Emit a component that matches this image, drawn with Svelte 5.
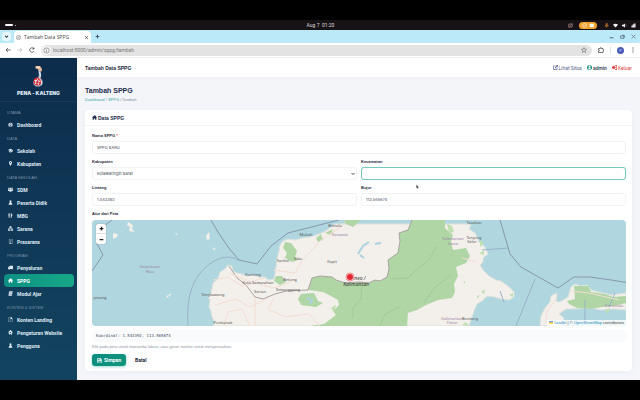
<script lang="ts">
	const menu = [
		{ title: 'UTAMA', items: [{ icon: 'gauge', label: 'Dashboard' }] },
		{
			title: 'DATA',
			items: [
				{ icon: 'school', label: 'Sekolah' },
				{ icon: 'pin', label: 'Kabupaten' },
			],
		},
		{
			title: 'DATA SEKOLAH',
			items: [
				{ icon: 'users', label: 'SDM' },
				{ icon: 'user', label: 'Peserta Didik' },
				{ icon: 'food', label: 'MBG' },
				{ icon: 'boxes', label: 'Sarana' },
				{ icon: 'building', label: 'Prasarana' },
			],
		},
		{
			title: 'PROGRAM',
			items: [
				{ icon: 'truck', label: 'Penyaluran' },
				{ icon: 'home', label: 'SPPG' },
				{ icon: 'book', label: 'Modul Ajar' },
			],
		},
		{
			title: 'KONTEN & SISTEM',
			items: [
				{ icon: 'file', label: 'Konten Landing' },
				{ icon: 'gear', label: 'Pengaturan Website' },
				{ icon: 'user', label: 'Pengguna' },
			],
		},
	];

	const icons: Record<string, string> = {
		gauge: 'M8 2a7 7 0 0 0-7 7c0 2 1 4 2 5h10c1-1 2-3 2-5a7 7 0 0 0-7-7zM7 4h2v2H7zM3 8h2v2H3zm8 0h2v2h-2zM7 8h2v3l1 2H6l1-2z',
		school: 'M8 2 0 6l8 4 6-3v5h2V6zM3 9v3c2 3 8 3 10 0V9l-5 3z',
		pin: 'M8 0a5 5 0 0 0-5 5c0 4 5 11 5 11s5-7 5-11a5 5 0 0 0-5-5zm0 3a2 2 0 1 1 0 4 2 2 0 0 1 0-4z',
		users: 'M1 2h4v4H1zm5 0h4v5H6zm5 0h4v4h-4zM0 7h5v6H0zm5 1h6v7H5zm6-1h5v6h-5z',
		user: 'M8 1a3 3 0 0 1 3 3v2a3 3 0 0 1-6 0V4a3 3 0 0 1 3-3zM6 9h4c3 1 4 3 4 6H2c0-3 1-5 4-6z',
		food: 'M1 1h1v4h1V1h1v4h1V1h1v6L5 8v7H2V8L1 7zm7 0c5 0 6 3 6 8h-2v6H9V1z',
		boxes: 'M5 1h6v6H5zM0 8h7v7H0zm9 0h7v7H9zM2 10v3h3v-3zm9 0v3h3v-3z',
		building: 'M3 0h11v16H3zm1 1v14h9V1zm2 2h2v2H6zm3 0h2v2H9zM6 7h2v2H6zm3 0h2v2H9zm-2 4h3v4H7z',
		truck: 'M6 2h10v9h-1a2 2 0 1 1-4 2H6a2 2 0 1 1-4 0H0V8l3-4h3zM3 6 2 8h3V6z',
		home: 'M8 1 0 8h2v7h4v-4h4v4h4V8h2l-3-3V2h-2v1z',
		book: 'M4 1h11l-2 11H4v1h9v2H3c-2 0-2-2-1-4zm2 3v1h6V4zm0 3v1h5V7z',
		file: 'M2 0h8l4 4v12H2zm1 1v14h10V6H8V1zm2 7h6v1H5zm0 3h5v1H5z',
		gear: 'M7 0h2l1 3 3-1 1 2-2 2v1l3 1v2l-3 1 1 3-2 1-2-2H7l-2 2-2-1 1-3-3-1V8l3-1V6L2 4l1-2 3 1zm1 6a2 2 0 1 0 0 4 2 2 0 0 0 0-4z',
		save: 'M1 1h11l3 3v11H1zm3 2v4h7V3zm4 0h2v3H8zM4 10v4h8v-4z',
		exit: 'M0 5h5V1l7 7-7 7v-4H0zm10-4h6v14h-6v-2h4V3h-4z',
		external: 'M1 2h8v2H3v9h9V9h2v6H1zm9-2h6v6l-2-2-6 6-2-2 6-6z',
		profile: 'M8 0a8 8 0 1 1 0 16A8 8 0 0 1 8 0zm0 2a3 3 0 0 0-3 4 3 3 0 0 0 6 0 3 3 0 0 0-3-4zM3 12c3 3 7 3 10 0-2-3-8-3-10 0z',
	};

	const places = [
		{ x: 243, y: 7, name: 'Bintulu' },
		{ x: 214, y: 16, name: 'Mukah' },
		{ x: 248, y: 16, name: 'Sarawak', soft: true },
		{ x: 240, y: 43, name: 'Kapit' },
		{ x: 206, y: 40, name: 'Sibu' },
		{ x: 191, y: 42, name: 'Sarikei' },
		{ x: 161, y: 56, name: 'Kuching' },
		{ x: 166, y: 64, name: 'Kota Samarahan' },
		{ x: 198, y: 61, name: 'Betong' },
		{ x: 168, y: 73, name: 'Serian' },
		{ x: 196, y: 71, name: 'Simanggang' },
		{ x: 121, y: 76, name: 'Singkawang' },
		{ x: 131, y: 104, name: 'Pontianak' },
		{ x: 8, y: 79, name: 'pinang' },
		{ x: 382, y: 4, name: 'Tarakan' },
		{ x: 382, y: 19, name: 'Tanjung' },
		{ x: 380, y: 23, name: 'Selor' },
		{ x: 378, y: 100, name: 'Bontang' },
		{ x: 58, y: 48, name: 'Kepulauan', soft: true },
		{ x: 58, y: 53, name: 'Riau', soft: true },
		{ x: 361, y: 20, name: 'Kalimantan', soft: true },
		{ x: 361, y: 25, name: 'Utara', soft: true },
		{ x: 360, y: 100, name: 'Kalimantan', soft: true },
		{ x: 360, y: 104, name: 'Timur', soft: true },
		{ x: 522, y: 87, name: 'Gorontalo', soft: true },
	];

	const active = 'SPPG';
	let name = $state('SPPG BARU');
	let district = $state('Kotawaringin Barat');
	let subdistrict = $state('');
	let lat = $state('1.543392');
	let lng = $state('113.565674');
</script>

{#snippet icon(id: string)}
	<svg class="icon" viewBox="0 0 16 16" aria-hidden="true">
		<path d={icons[id]} fill="currentColor" fill-rule="evenodd" />
	</svg>
{/snippet}

<div class="desktop">
	<div class="system">
		<div class="spaces"><i></i><b></b></div>
		<time>Aug 7&nbsp; 01:20</time>
		<div class="tray">
			<svg class="glyph" viewBox="0 0 12 12"><path d="M2 3h8v6H2zM1 11 11 1" fill="none" stroke="#a77" stroke-width="1.5" /><circle cx="6" cy="6" r="5" fill="none" stroke="#888" /></svg>
			<span class="share">
				<svg viewBox="0 0 36 12"><circle cx="11" cy="6" r="4" fill="none" stroke="#fff" /><path d="M9 6h4M22 3h7v6h-7z" stroke="#fff" fill="#fff" /></svg>
			</span>
			<svg class="glyph" viewBox="0 0 12 12"><path d="M5 1h3v6H5zM3 5v3h7V5M6 8v3" stroke="#c87a2c" fill="#c87a2c" /></svg>
			<svg class="glyph" viewBox="0 0 12 12"><path d="M0 4q6-5 12 0L6 11z" fill="#fff" /></svg>
			<svg class="glyph" viewBox="0 0 12 12"><path d="M0 4h3l4-3v10L3 8H0z" fill="#fff" /><path d="M9 3q3 3 0 6" fill="none" stroke="#ccc" /></svg>
			<svg class="glyph" viewBox="0 0 12 12"><path d="M1 6h3V3h3V1h4v10H1z" fill="#ddd" /></svg>
		</div>
	</div>

	<div class="tabs">
		<button class="tab-list" aria-label="Search tabs">
			<svg viewBox="0 0 12 12"><path d="m4 5 2 2 2-2" fill="none" stroke="#233" stroke-width="1.4" /></svg>
		</button>
		<div class="tab">
			<svg class="glyph" viewBox="0 0 12 12"><circle cx="6" cy="6" r="5" fill="none" stroke="#777" stroke-width="1.4" /><path d="M2 9 9 2M5 6l4 2" stroke="#777" stroke-width="1.4" /></svg>
			<span>Tambah Data SPPG</span>
			<button aria-label="Close tab"><svg viewBox="0 0 8 8"><path d="m2 2 4 4m0-4L2 6" stroke="#333" stroke-width="1.3" /></svg></button>
		</div>
		<button class="new-tab" aria-label="New tab"><svg viewBox="0 0 8 8"><path d="M4 1v6M1 4h6" stroke="#234" stroke-width="1.2" /></svg></button>
		<div class="window-buttons">
			<button aria-label="Minimize"><svg viewBox="0 0 8 8"><path d="M1 6h6" stroke="#456" stroke-width="1.4" /></svg></button>
			<button aria-label="Restore"><svg viewBox="0 0 8 8"><path d="M1 3h5v4H1zm2-1h4v4" fill="none" stroke="#456" /></svg></button>
			<button aria-label="Close window"><svg viewBox="0 0 8 8"><path d="m1 1 6 6m0-6L1 7" stroke="#678" stroke-width="1.2" /></svg></button>
		</div>
	</div>

	<div class="toolbar">
		<button aria-label="Back"><svg viewBox="0 0 12 12"><path d="M11 6H2m4-4L2 6l4 4" fill="none" stroke="#444" stroke-width="1.5" /></svg></button>
		<button aria-label="Forward"><svg viewBox="0 0 12 12"><path d="M1 6h9M6 2l4 4-4 4" fill="none" stroke="#bbb" stroke-width="1.5" /></svg></button>
		<button aria-label="Reload"><svg viewBox="0 0 12 12"><path d="M10 4a4.5 4.5 0 1 0 0 4M10 1v3H7" fill="none" stroke="#444" stroke-width="1.6" /></svg></button>
		<div class="address">
			<span class="site-info"><svg viewBox="0 0 12 12"><circle cx="6" cy="6" r="4.5" fill="none" stroke="#666" /><path d="M6 5v4M6 3v1" stroke="#666" /></svg></span>
			<input aria-label="Address" value="localhost:8000/admin/sppg/tambah" />
			<button aria-label="Bookmark"><svg viewBox="0 0 12 12"><path d="m6 1 1.5 3.4 3.5.3-2.7 2.4.8 3.6L6 8.8l-3.1 1.9.8-3.6L1 4.7l3.5-.3z" fill="none" stroke="#555" /></svg></button>
		</div>
		<div class="browser-actions">
			<button aria-label="Extensions"><svg viewBox="0 0 12 12"><path d="M1 3h3.5V1.500h2V3H10v3h1v2h-1v3H1V8h1.500V6H1z" fill="none" stroke="#444" stroke-width="1.4" /></svg></button>
			<i class="divider"></i>
			<button class="avatar" aria-label="Profile">P</button>
			<button aria-label="Browser menu"><svg viewBox="0 0 12 12"><path d="M5 1h2v2H5zm0 4h2v2H5zm0 4h2v2H5z" fill="#444" /></svg></button>
		</div>
	</div>

	<div class="workspace">
		<aside>
			<div class="brand">
				<svg viewBox="0 0 24 44" aria-hidden="true">
					<path d="M6 2h9l4 6-1 5h-6l-1-5-5-1z" fill="#e9b89a" />
					<path d="M8 3h7v3H8z" fill="#f7dfca" />
					<path d="M15 11q4 9 1 14l4 7q2 8-6 11H7q-7-4-5-10 3-6 9-7 3-6 1-13z" fill="#aebfd2" />
					<circle cx="10" cy="33" r="8" fill="#d52d3b" />
					<path d="m10 26 2 5 5 1-4 3v5l-4-3-5 2 2-5-3-4h5z" fill="#f0e1e4" />
					<path d="m10 29 1 4 3 1-3 2-2 2-2-3z" fill="#c52838" />
					<path d="M14 14q4 8 0 13 6 4 4 12" fill="none" stroke="#f2f5f9" stroke-width="1.5" />
				</svg>
				<strong>PENA - KALTENG</strong>
			</div>
			<nav>
				{#each menu as group (group.title)}
					<h2>{group.title}</h2>
					{#each group.items as item (item.label)}
						<a href="#{item.label}" class:active={item.label === active}>
							{@render icon(item.icon)}
							<span>{item.label}</span>
						</a>
					{/each}
				{/each}
			</nav>
		</aside>

		<main>
			<header>
				<strong>Tambah Data SPPG</strong>
				<div class="account">
					<a href="#situs">{@render icon('external')}Lihat Situs</a>
					<a href="#admin" class="admin"><span class="badge">{@render icon('profile')}</span>admin</a>
					<a href="#keluar" class="logout">{@render icon('exit')}Keluar</a>
				</div>
			</header>

			<div class="content">
				<h1>Tambah SPPG</h1>
				<div class="crumbs">
					<a href="#dashboard">Dashboard</a> / <a href="#sppg">SPPG</a> / Tambah
				</div>

				<section class="card">
					<h3>{@render icon('home')}Data SPPG</h3>
					<form>
						<div class="field wide">
							<label for="name">Nama SPPG <em>*</em></label>
							<input id="name" bind:value={name} />
						</div>
						<div class="field">
							<label for="district">Kabupaten</label>
							<div class="select">
								<select id="district" bind:value={district}>
									<option>Kotawaringin Barat</option>
								</select>
								<svg viewBox="0 0 8 8"><path d="m1 2 3 3 3-3" fill="none" stroke="#333" stroke-width="1.8" /></svg>
							</div>
						</div>
						<div class="field">
							<label for="subdistrict">Kecamatan</label>
							<input id="subdistrict" class="focused" bind:value={subdistrict} />
						</div>
						<div class="field">
							<label for="lat">Lintang</label>
							<input id="lat" bind:value={lat} />
						</div>
						<div class="field">
							<label for="lng">Bujur</label>
							<input id="lng" bind:value={lng} />
						</div>

						<div class="wide">
							<p class="map-title">Atur dari Peta</p>
							<div class="map">
								<svg viewBox="0 0 534 106" preserveAspectRatio="xMidYMid slice" role="img" aria-label="Peta Kalimantan">
									<path
										class="land"
										d="M121 106l2-3-3-6-1-6-2-4 1-7-2-4 3-3 1-5 1-5 5-4 2-7 5-3 3-4 4 1 1 5 4 2 5 1 4 2 7-1 7 2 4 0 5 3 5-1 1-5 1-7 1-8 2-8 1-6 3-4 5-2 7 1 7-2 8-1 9-3 7-3 6-5 3-2H375L379 5 377 9 383 13 385 17 387 22 393 27 396 34 391 38 391 42 388 45 391 50 397 56 404 60 409 61 416 66 422 72 422 77 417 80 409 79 402 77 395 76 390 81 385 84 382 91 380 97 377 106Z"
									/>
									<path
										class="land"
										d="M448 106l1-10 4-8 5-6 1-6 6-3-1 8 4 1 8-5 3-10 4-3 6 2 6-1 4 5 8 2 12 3 15-2v17l-12-1-13 1-9-2-18 1-8 0-7 5 5 4-2 7z"
									/>
									<path
										class="forest"
										d="M320 0L316 10 307 13 308 21 306 33 296 40 297 49 295 57 288 61 283 60 277 63 268 62 253 63 244 60 240 57 228 56 220 58 216 70 231 72 239 76 246 80 247 85 241 91 244 95 232 104 218 106H315L316 93 325 90 334 85 346 80 360 78 363 72 362 64 366 56 364 47 374 43 378 36 374 28 361 30 359 22 361 15 353 8V0Z"
									/>
									<path class="forest" d="M482 66L496 66 499 72 513 74 521 77 534 76V83L526 85 510 87 498 89 485 88 477 84 475 81 483 79ZM193 22l6 1 6 8-2 6 3 3-6 2-7-4 2-5-4-5zM224 18l5-4 2 6-5 2zM233 13l8-4-2 6zM255 0h14l-8 7-7-3-3-2zM184 56l6 0 4 6-6 3-6-4zM209 74l13-1 4 8 5 2-7 4-15-2-3-6z" />
									<path class="forest small" d="M389 72l4-3-1 5zM385 76l3-1-3 4zM387 33l5-2v4zM417 75l4-2v4zM239 88l5-3-2 7zM513 90l5-2-2 6zM388 20l4 3-4 4zM355 4l5 2 2 6-5 1zM371 62l2-1v3zM370 105l4-3 3 4z" />
									<path class="water" d="M266 34l5-8 6-4M268 35l4 3M283 24l6-1M215 78l5 2-2 4" />
									<path class="island" d="M36 2l5 3-1 4 3 3-6-1 1-4-3-2zM21 13l5 1-1 3-4 2zM114 16l3-4 1 7-3 1zM120 27l4 2-2 1zM83 13l3 1-2 1zM74 76l3-1-1 3zM77 74l3 0-3 2z" />
									<path class="sea-line" d="M12 6l8-6M0 51l11-16L5 24M119 0l7 12 10 15 11 13 18 4 14-18 17-13L247 0M408 0l10 34 11 13 37 21 16-11 16 0 21 3 31 5" />
									<path class="sea-line thin" d="M96 106q-4-47 26-65 15-8 26 0M390 30l26-2M443 59l-19 47M408 71l4 11M523 73l-6 14M493 80v26" />
									<path class="state" d="M137 46l8 12 9 7 9 12 8 2 12-5 11-3 22-1 4-12 8-2 12 1 4 3 9 3 15-1 9 1 6-3 5 1 7-4 2-8-1-9 10-7 2-12-1-8 9-3 4-10" />
									<path class="road" d="M121 60l15-3 14 9 14-3 18 5 16-6M123 85l21-6 14 8 18-9M132 106l4-14 14-3 8 17M181 50l22 3 7-12 9-10 11-12 19-12M137 53l22 9 15-5M182 78l-6 11 17 8 24-3 11 12M163 78v28M370 38l15 4M465 78l-10 13-1 12M479 71l18 2 30 7M253 2l-5 6-8 5" />
									<path class="province" d="M270 65l-1 14-8 9v10M345 26l-8 14-14 11-7 7-15 1M359 55l-17 13-10 15M309 86l-16 8-5 12" />
									{#each places as place}
										<text x={place.x} y={place.y} class:soft={place.soft}>{place.name}</text>
									{/each}
									<text class="region" x="264" y="60">Borneo /</text>
									<text class="region" x="264" y="66">Kalimantan</text>
									<circle cx="258" cy="57" r="4" fill="#fbeaea" stroke="#ee8a8f" />
									<circle cx="258" cy="57" r="3" fill="#e1262f" />
								</svg>
								<div class="zoom">
									<button type="button" aria-label="Zoom in"><svg viewBox="0 0 8 8"><path d="M4 1v6M1 4h6" /></svg></button>
									<button type="button" aria-label="Zoom out"><svg viewBox="0 0 8 8"><path d="M1 4h6" /></svg></button>
								</div>
								<div class="attribution">
									<svg viewBox="0 0 12 8"><path d="M0 0h12v4H0z" fill="#4c7be1" /><path d="M0 4h12v4H0z" fill="#ffd500" /></svg>
									<a href="#leaflet">Leaflet</a> | © <a href="#osm">OpenStreetMap</a> contributors
								</div>
							</div>
							<output>Koordinat: {lat}, {lng}</output>
							<p class="help">Klik pada peta untuk menandai lokasi, atau geser marker untuk menyesuaikan.</p>
							<div class="actions">
								<button type="submit" class="submit">{@render icon('save')}Simpan</button>
								<button type="button" class="cancel">Batal</button>
							</div>
						</div>
					</form>
				</section>
			</div>
		</main>
	</div>
	<svg class="pointer" viewBox="0 0 8 12" aria-hidden="true"><path d="M1 0v9l2-2 2 4 1-1-1-3h3z" fill="#222" stroke="#fff" stroke-width="0.5" /></svg>
</div>

<style>
	:global(body) {
		margin: 0;
		background: #000;
	}

	.desktop,
	.desktop * {
		box-sizing: border-box;
	}

	.desktop {
		position: relative;
		display: flex;
		flex-direction: column;
		min-height: 100vh;
		padding: 20px 0;
		overflow: hidden;
		background: #000;
		color: #1e293b;
		font-family: 'Liberation Sans', Arial, sans-serif;
		font-size: 4px;
	}

	svg {
		display: block;
	}

	a {
		color: inherit;
		text-decoration: none;
	}

	button {
		border: 0;
		padding: 0;
		background: transparent;
		color: inherit;
		font: inherit;
	}

	h1,
	h2,
	h3,
	p {
		margin: 0;
	}

	.icon {
		width: 5px;
		height: 5px;
		flex: none;
	}

	.glyph {
		width: 5px;
		height: 5px;
	}

	.system {
		display: grid;
		grid-template-columns: 1fr auto 1fr;
		align-items: center;
		height: 10px;
		padding: 0 4px 0 5px;
		background: #171216;
		color: #ddd;
		font: 5px Roboto, sans-serif;
	}

	.spaces {
		display: flex;
		align-items: center;
		gap: 2px;
	}

	.spaces i {
		width: 8px;
		height: 2px;
		border-radius: 2px;
		background: #fff;
	}

	.spaces b {
		width: 1px;
		height: 1px;
		background: #aaa;
	}

	.tray {
		display: flex;
		align-items: center;
		justify-content: flex-end;
		gap: 4px;
	}

	.share {
		width: 18px;
		margin: 0 3px 0 2px;
		border-radius: 4px;
		background: #f0a42f;
	}

	.share svg {
		height: 7px;
		width: 18px;
	}

	.tabs {
		display: flex;
		align-items: center;
		height: 13px;
		padding: 0 4px 0 2px;
		background: #bce9f7;
	}

	.tab-list {
		width: 9px;
		height: 9px;
		border-radius: 3px;
		background: #e6f8fd;
	}

	.tab {
		display: flex;
		align-items: center;
		align-self: flex-end;
		gap: 3px;
		width: 77px;
		height: 12px;
		margin-left: 3px;
		padding: 0 2px;
		border-radius: 4px 4px 0 0;
		background: #fff;
		color: #444;
	}

	.tab span {
		flex: 1;
		white-space: nowrap;
		font: 5px 'Open Sans', sans-serif;
	}

	.tab button,
	.new-tab,
	.window-buttons button {
		width: 5px;
		height: 5px;
	}

	.new-tab {
		margin-left: 4px;
	}

	.window-buttons {
		display: flex;
		gap: 6px;
		margin-left: auto;
	}

	.toolbar {
		display: flex;
		align-items: center;
		gap: 6px;
		height: 15px;
		padding: 0 4px 0 5px;
		border-bottom: 1px solid #eee;
		background: #fff;
	}

	.toolbar button {
		width: 6px;
		height: 6px;
		flex: none;
	}

	.address {
		display: flex;
		align-items: center;
		flex: 1;
		gap: 2px;
		height: 11px;
		padding: 0 5px 0 1px;
		border-radius: 6px;
		background: #e3e3e3;
	}

	.site-info {
		padding: 1px;
		border-radius: 5px;
		background: #f5f5f5;
	}

	.site-info svg {
		width: 7px;
		height: 7px;
	}

	.address input {
		flex: 1;
		min-width: 0;
		padding: 0;
		border: 0;
		outline: 0;
		background: transparent;
		color: #777;
		font: 5px Roboto, sans-serif;
	}

	.browser-actions {
		display: flex;
		align-items: center;
		gap: 6px;
	}

	.divider {
		width: 1px;
		height: 6px;
		background: #d5e5ea;
	}

	.toolbar .avatar {
		width: 7px;
		height: 7px;
		border-radius: 50%;
		background: #4859b5;
		color: #dbe0ff;
		line-height: 7px;
	}

	.workspace {
		display: flex;
		flex: 1;
	}

	aside {
		width: 77px;
		flex: none;
		background: linear-gradient(#0d2c4c, #124460);
		color: #dfe8f2;
	}

	.brand {
		display: flex;
		flex-direction: column;
		align-items: center;
		gap: 3px;
		height: 44px;
		padding-top: 7px;
		border-bottom: 1px solid #1a3b59;
		font: 5px/6px Inter, sans-serif;
	}

	.brand svg {
		width: 13px;
		height: 22px;
	}

	.brand strong {
		font-weight: 900;
	}

	nav {
		padding: 3px 3px 0 4px;
	}

	nav h2 {
		height: 13px;
		padding: 5px 3px 0;
		color: #7890a8;
		font-size: 4px;
		font-weight: 400;
		line-height: 6px;
	}

	nav a {
		display: flex;
		align-items: center;
		gap: 4px;
		height: 13px;
		padding: 0 4px;
		border-radius: 4px;
		font: 700 5px Roboto, sans-serif;
	}

	nav a.active {
		background: linear-gradient(90deg, #0d8f83, #17a887);
		color: #fff;
	}

	main {
		flex: 1;
		min-width: 0;
		background: #f3f5f9;
	}

	header {
		display: flex;
		align-items: center;
		justify-content: space-between;
		height: 20px;
		padding: 0 8px;
		border-bottom: 1px solid #eef1f5;
		background: #fff;
		font-size: 5px;
	}

	.account {
		display: flex;
		gap: 5px;
		font: 5px Roboto, sans-serif;
	}

	.account a {
		display: flex;
		align-items: center;
		gap: 1px;
		color: #56618a;
	}

	.account .admin {
		color: #26364a;
		font-weight: 500;
	}

	.badge {
		color: #149080;
	}

	.account .logout {
		color: #e23a3a;
	}

	.content {
		padding: 9px 8px;
	}

	h1 {
		color: #1d2b4c;
		font-size: 7px;
		line-height: 8px;
	}

	.crumbs {
		margin-top: 2px;
		color: #8290a1;
		font-size: 4px;
		line-height: 5px;
	}

	.crumbs a {
		color: #35aaa0;
	}

	.card {
		margin-top: 8px;
		border-radius: 4px;
		background: #fff;
		box-shadow: 0 1px 4px #d7dde855;
	}

	h3 {
		display: flex;
		align-items: center;
		gap: 1px;
		height: 16px;
		padding: 0 7px;
		border-bottom: 1px solid #f1f4f7;
		color: #1d2b4c;
		font-size: 5px;
	}

	form {
		display: grid;
		grid-template-columns: 1fr 1fr;
		gap: 5px 4px;
		padding: 7px 6px 5px 7px;
	}

	.wide {
		grid-column: 1 / -1;
	}

	.field {
		display: flex;
		flex-direction: column;
		gap: 2px;
	}

	label,
	.map-title {
		font-size: 4px;
		font-weight: 700;
		line-height: 6px;
	}

	label em {
		color: #e23a3a;
		font-style: normal;
	}

	.field input,
	select {
		width: 100%;
		height: 13px;
		padding: 0 4px;
		border: 1px solid #f0f3f6;
		border-radius: 3px;
		outline: 0;
		background: #fff;
		color: #3c4654;
		font: 4px Inter, sans-serif;
	}

	.field .focused {
		border-color: #78c9b9;
		box-shadow: 0 0 1px #c4ebe2;
	}

	select {
		appearance: none;
	}

	.select {
		position: relative;
	}

	.select svg {
		position: absolute;
		top: 5px;
		right: 2px;
		width: 4px;
		height: 4px;
	}

	.map-title {
		margin-bottom: 3px;
	}

	.map {
		position: relative;
		aspect-ratio: 534 / 106;
		border-radius: 4px;
		overflow: hidden;
		background: #b0d6e0;
	}

	.map > svg {
		width: 100%;
		height: 100%;
	}

	.land,
	.island {
		fill: #f3efea;
		stroke: #dce2dc;
		stroke-width: 1px;
	}

	.island {
		stroke: none;
	}

	.forest {
		fill: #b0d6a5;
	}

	.small {
		fill: #bfdfb3;
	}

	.water,
	.sea-line,
	.state,
	.road,
	.province {
		fill: none;
		stroke: #8797ae;
		stroke-width: 1px;
	}

	.water {
		stroke: #abd3df;
		stroke-width: 2px;
	}

	.thin {
		stroke: #98b3c8;
	}

	.state {
		stroke: #a9a3a0;
	}

	.road {
		stroke: #f3ddd4;
	}

	.province {
		stroke: #a2c89d;
	}

	.map text {
		fill: #565656;
		font: 4px 'Noto Sans', sans-serif;
		text-anchor: middle;
	}

	.map text.soft {
		fill: #9a83a7;
	}

	.map text.region {
		fill: #333;
		font-size: 5px;
		font-style: italic;
	}

	.zoom {
		position: absolute;
		top: 4px;
		left: 4px;
		width: 10px;
		border-radius: 2px;
		background: #fff;
		box-shadow: 0 0 1px #667;
	}

	.zoom button {
		display: grid;
		place-items: center;
		width: 10px;
		height: 10px;
	}

	.zoom button:first-child {
		border-bottom: 1px solid #ddd;
	}

	.zoom svg {
		width: 5px;
		height: 5px;
		stroke: #222;
		stroke-width: 2px;
	}

	.attribution {
		position: absolute;
		right: 0;
		bottom: 0;
		padding: 0 2px;
		background: #ffffffcc;
		color: #444;
		font-size: 4px;
		line-height: 6px;
	}

	.attribution a {
		color: #1689bd;
	}

	.attribution svg {
		display: inline-block;
		width: 4px;
		height: 3px;
	}

	output {
		display: block;
		height: 12px;
		margin-top: 4px;
		padding: 0 4px;
		border-radius: 3px;
		background: #f9fafc;
		color: #414b58;
		font: 4px/12px 'DejaVu Sans Mono', monospace;
	}

	.help {
		margin-top: 2px;
		color: #8994a3;
		font-size: 4px;
		line-height: 5px;
	}

	.actions {
		display: flex;
		gap: 5px;
		margin-top: 5px;
	}

	.actions button {
		display: flex;
		align-items: center;
		gap: 2px;
		height: 12px;
		padding: 0 4px;
		border-radius: 3px;
		font: 700 5px Roboto, sans-serif;
	}

	.actions .submit {
		padding: 0 5px;
		background: linear-gradient(135deg, #0b8b80, #12977d);
		box-shadow: 0 1px 3px #14a58d66;
		color: #fff;
	}

	.pointer {
		position: absolute;
		left: 65%;
		top: 46%;
		width: 3px;
		height: 6px;
	}
</style>
